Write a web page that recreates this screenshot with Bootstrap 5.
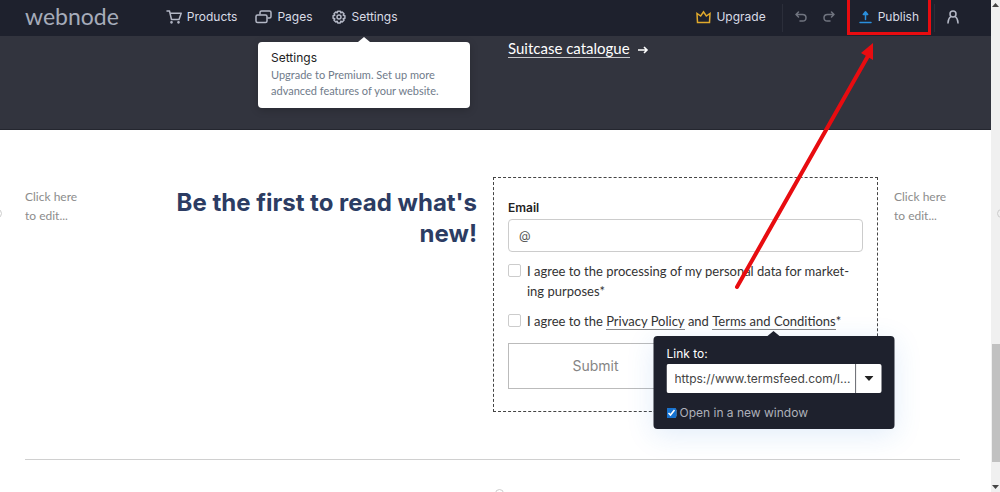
<!DOCTYPE html>
<html lang="en">
<head>
<meta charset="utf-8">
<meta name="viewport" content="width=device-width, initial-scale=1">
<title>Webnode editor</title>
<link href="https://cdn.jsdelivr.net/npm/bootstrap@5.3.0/dist/css/bootstrap.min.css" rel="stylesheet">
<style>
  :root { --ink: #1e212d; --hero: #32343e; --navy: #2c3c63; }
  body { font-family: Inter, "Liberation Sans", sans-serif; font-size: 12px; line-height: 20px; color: #333; background: #fff; }
  svg { display: block; flex: none; }
  .editor { height: 100vh; overflow: hidden; }
  .topbar { background: var(--ink); height: 36px; padding: 0 32px 0 25px; flex-wrap: nowrap; justify-content: flex-start; }
  .brand { font: 400 23px/30px Lato, sans-serif; color: #a6acba; text-decoration: none; margin-right: 47px; padding: 0 0 4px; }
  .tool { background: none; border: 0; padding: 0 0 2px; height: 36px; color: #d9dce6; display: flex; align-items: center; gap: 5px; position: relative; }
  .tool-wide { margin-left: 18px; }
  .icons { fill: none; stroke: #b4b8c6; stroke-width: 1.5; stroke-linecap: round; stroke-linejoin: round; }
  .divider { width: 1px; height: 28px; background: #2b2e3a; }
  .publish { border: solid #e80c10; border-width: 0 3px 3px; height: 35px; padding: 2px 9px 0; gap: 6px; align-self: flex-start; margin: 0 3px 0 12px; }
  .hint { position: absolute; z-index: 5; top: 42px; left: 50%; transform: translateX(-50%); width: 212px; padding: 7px 13px 9px; background: #fff; border-radius: 4px; text-align: left; font: 400 11px/16px Lato, sans-serif; color: #707b8a; white-space: nowrap; box-shadow: 0 2px 8px #0003; }
  .hint strong { display: block; font: 400 12px/18px Inter, sans-serif; color: #222; }
  .hint::before, .linkbox::before { content: ""; position: absolute; left: 50%; bottom: 100%; margin-left: -6px; border: solid transparent; border-width: 0 6px 5px; border-bottom-color: #fff; }
  .hero-band { background: var(--hero); height: 94px; border-bottom: 1px solid #24262f; }
  .cols { display: grid; grid-template-columns: 12% minmax(0, 1fr) 385px 82px; margin: 0 31px 0 25px; border-bottom: 1px solid #d0d0d0; }
  .news { padding-top: 47px; }
  .catalogue { grid-column: 3; padding-left: 15px; color: #fff; font: 400 15px/24px Lato, sans-serif; }
  .catalogue a { color: inherit; text-decoration: none; border-bottom: 1px solid #c5c6ca; }
  .side { font: 400 12px/19px Lato, sans-serif; color: #8c8c8c; padding-top: 10px; }
  .headline { font-size: 24px; line-height: 31px; font-weight: 700; color: var(--navy); text-align: right; margin: 0; padding: 10px 16px 0 0; }
  .signup { border: 1px dashed #444; padding: 20px 14px 22px; margin-bottom: 47px; }
  .signup .form-label { font-weight: 600; margin: 0 0 1px; display: block; color: #222; }
  .signup .form-control { height: 33px; font-size: 12px; border-color: #ccc; border-radius: 4px; padding: 0 10px; margin-bottom: 9px; }
  .signup .form-control::placeholder { color: #555; opacity: 1; }
  .agree { display: flex; gap: 6px; font-family: Lato, sans-serif; font-size: 13px; margin-bottom: 10px; color: #333; }
  .agree .form-check-input { width: 13px; height: 13px; margin: 3px 0 0; border-color: #ccc; border-radius: 2px; flex: none; }
  .agree a { color: inherit; text-decoration: none; border-bottom: 1px solid #888; }
  .anchor { position: relative; display: inline-block; line-height: 15px; }
  .submit { width: 175px; height: 46px; background: #fff; border: 1px solid #bbb; color: #858585; font-size: 14px; margin-top: 2px; }
  .linkbox { position: absolute; z-index: 4; top: 22px; left: 50%; transform: translateX(-50%); width: 241px; padding: 8px 13px 6px; background: var(--ink); border-radius: 4px; color: #fff; font: 400 12px/20px Inter, sans-serif; box-shadow: 0 6px 28px #2878d822; }
  .linkbox::before { border-bottom-color: var(--ink); }
  .signup .linkbox .form-control { height: 29px; padding: 0 0 0 8px; margin: 0; border: 0; border-radius: 2px 0 0 2px; color: #444; }
  .picker { width: 26px; border: 0; border-left: 1px solid #ccc; border-radius: 0 2px 2px 0; background: #fff; padding: 0 8px; flex: none; }
  .newwin { display: flex; align-items: center; gap: 3px; color: #aeb1bb; margin-top: 10px; }
  .newwin input { width: 10px; height: 10px; margin: 0; accent-color: #1673d1; }
  .rail { width: 9px; background: #f0f0f0; display: flex; flex-direction: column; align-items: center; justify-content: space-between; padding: 2px 0; position: relative; }
  .thumb { position: absolute; left: 1px; right: 0; top: 70%; height: 24%; background: #c1c1c1; }
  .dot { position: absolute; width: 9px; height: 9px; border: 1px solid #ccc; border-radius: 50%; }
  .dot-left { left: -7px; top: 209px; }
  .dot-right { left: 6px; top: 209px; }
  .dot-bottom { left: 50%; margin-left: -1px; bottom: -6px; }
  .pointer { position: absolute; z-index: 9; left: 734px; top: 42px; pointer-events: none; }
</style>
</head>
<body>
<div class="editor d-flex position-relative">
  <main class="flex-grow-1 position-relative">
    <nav class="navbar topbar">
      <a class="brand" href="#">webnode</a>
      <button class="tool" type="button">
        <svg class="icons" width="16" height="14"><path d="M1 1h2.500l2 8.500h7.500l2.200-6.200H4.200"/><circle cx="5.500" cy="12.300" r=".6"/><circle cx="12.500" cy="12.300" r=".6"/></svg>Products</button>
      <button class="tool tool-wide" type="button">
        <svg class="icons" width="17" height="14"><path d="M5 4V2.500Q5 1 6.500 1h8Q16 1 16 2.500v4Q16 8 14.500 8H13"/><rect x="1" y="5" width="11" height="7.500" rx="1.500"/></svg>Pages</button>
      <button class="tool tool-wide" type="button">
        <svg class="icons" width="16" height="16" viewBox="0 0 16 16"><path d="M6.700 1.300h2.600l.5 1.600 1.400-.8 1.800 1.800-.8 1.400 1.700.5v2.500l-1.700.6.8 1.400-1.800 1.800-1.400-.8-.5 1.700H6.700l-.5-1.700-1.400.8L3 10.300l.8-1.400-1.700-.6V5.800l1.700-.5L3 3.900l1.800-1.800 1.400.8z" transform="translate(0 .9)"/><circle cx="8" cy="8" r="2"/></svg>Settings
        <span class="hint"><strong>Settings</strong>Upgrade to Premium. Set up more<br>advanced features of your website.</span></button>
      <button class="tool ms-auto" type="button">
        <svg class="icons" width="15" height="14" style="stroke:#e0a92c"><path stroke-linejoin="miter" d="M1.500 12.500 1 3.500 4.700 6 7.500 1.800 10.300 6 14 3.500l-.5 9z"/></svg>Upgrade</button>
      <span class="divider ms-3"></span>
      <button class="tool ms-2 ps-1" type="button" aria-label="Undo"><svg class="icons" width="12" height="12" style="stroke:#70747f"><path d="M3.500 1 1 3.500 3.500 6M1 3.500h6.500q3.500 0 3.500 3.300t-3.500 3.200H5"/></svg></button>
      <button class="tool ms-3" type="button" aria-label="Redo"><svg class="icons" width="12" height="12" style="stroke:#70747f"><path d="M8.500 1 11 3.500 8.500 6M11 3.500H4.500Q1 3.500 1 6.800T4.500 10H7"/></svg></button>
      <button class="tool publish" type="button">
        <svg class="icons" width="13" height="14" style="stroke:#2a8fdd"><path fill="#2a8fdd" d="M6.500 9.500V2M4.300 4.500l2.200-2.700 2.200 2.700zM1 12.500h11"/></svg>Publish</button>
      <span class="divider"></span>
      <button class="tool ms-2 ps-1" type="button" aria-label="Account"><svg class="icons" width="12" height="14"><circle cx="6" cy="4" r="3"/><path d="M3.800 6.500Q1 8.500 1 13M8.200 6.500Q11 8.500 11 13"/></svg></button>
    </nav>

    <section class="hero-band">
      <div class="cols border-0"><div class="catalogue"><a href="#">Suitcase catalogue</a>
        <svg class="d-inline ms-1" width="12" height="10" fill="none" stroke="#fff" stroke-width="1.600"><path d="M1 5h9M7 2l3 3-3 3"/></svg></div></div>
    </section>

    <section class="cols news">
      <div class="side">Click here<br>to edit...</div>
      <h2 class="headline">Be the first to read what's new!</h2>
      <form class="signup">
        <label class="form-label" for="email">Email</label>
        <input class="form-control" id="email" type="text" placeholder="@">
        <div class="agree"><input class="form-check-input" type="checkbox" id="data">
          <label for="data">I agree to the processing of my personal data for market-<br>ing purposes*</label></div>
        <div class="agree"><input class="form-check-input" type="checkbox" id="terms" aria-label="I agree to the terms">
          <div>I agree to the <a class="anchor" href="#">Privacy Policy</a> and
            <span class="anchor"><a class="d-block" href="#">Terms and Conditions</a>
              <span class="linkbox">
                <label class="d-block" for="url">Link to:</label>
                <span class="d-flex"><input class="form-control" id="url" type="text" value="https://www.termsfeed.com/l..."><button class="picker" type="button" aria-label="Choose link"><svg width="9" height="6"><path d="M0 0h9L4.500 5z" fill="#222"/></svg></button></span>
                <label class="newwin"><input type="checkbox" checked> Open in a new window</label>
              </span></span>*</div></div>
        <button class="submit" type="button">Submit</button>
      </form>
      <div class="side ps-3">Click here<br>to edit...</div>
    </section>
    <span class="dot dot-left"></span>
    <span class="dot dot-bottom"></span>
  </main>
  <aside class="rail">
    <svg width="7" height="5"><path d="M0 5h7L3.500 1z" fill="#444"/></svg>
    <span class="thumb"></span><span class="dot dot-right"></span>
    <svg width="7" height="5"><path d="M0 0h7L3.500 4z" fill="#444"/></svg>
  </aside>
  <svg class="pointer" width="144" height="250"><path d="M3 245 134 14" stroke="#e80c10" stroke-width="4" stroke-linecap="round"/><path d="M139 1v17l-12-7z" fill="#e80c10"/></svg>
</div>
<script src="https://cdn.jsdelivr.net/npm/bootstrap@5.3.0/dist/js/bootstrap.bundle.min.js"></script>
</body>
</html>
